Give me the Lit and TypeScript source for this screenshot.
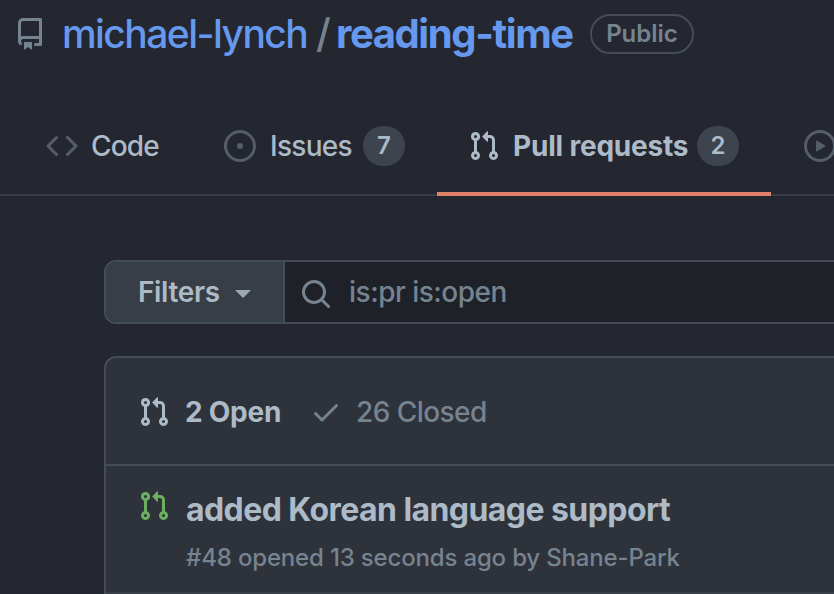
import { LitElement, html, css, svg } from "lit";
import { customElement, property } from "lit/decorators.js";

const ICONS: Record<string, string> = {
  repo: "M2 2.5A2.5 2.5 0 014.5 0h8.75a.75.75 0 01.75.75v12.5a.75.75 0 01-.75.75h-2.5a.75.75 0 110-1.5h1.75v-2h-8a1 1 0 00-.714 1.7.75.75 0 01-1.072 1.05A2.495 2.495 0 012 11.5v-9zm10.5-1V9h-8c-.356 0-.694.074-1 .208V2.5a1 1 0 011-1h8zM5 12.25v3.25a.25.25 0 00.4.2l1.45-1.087a.25.25 0 01.3 0L8.6 15.7a.25.25 0 00.4-.2v-3.25a.25.25 0 00-.25-.25h-3.5a.25.25 0 00-.25.25z",
  code: "M4.72 3.22a.75.75 0 011.06 1.06L2.06 8l3.72 3.72a.75.75 0 11-1.06 1.06L.47 8.53a.75.75 0 010-1.06l4.25-4.25zm6.56 0a.75.75 0 10-1.06 1.06L13.94 8l-3.72 3.72a.75.75 0 101.06 1.06l4.25-4.25a.75.75 0 000-1.06l-4.25-4.25z",
  issue: "M8 9.5a1.5 1.5 0 100-3 1.5 1.5 0 000 3zM8 0a8 8 0 100 16A8 8 0 008 0zM1.5 8a6.5 6.5 0 1113 0 6.5 6.5 0 01-13 0z",
  pull: "M7.177 3.073L9.573.677A.25.25 0 0110 .854v4.792a.25.25 0 01-.427.177L7.177 3.427a.25.25 0 010-.354zM3.75 2.5a.75.75 0 100 1.5.75.75 0 000-1.5zm-2.25.75a2.25 2.25 0 113 2.122v5.256a2.251 2.251 0 11-1.5 0V5.372A2.25 2.25 0 011.5 3.25zM11 2.5h-1V4h1a1 1 0 011 1v5.628a2.251 2.251 0 101.5 0V5A2.5 2.5 0 0011 2.5zm1 10.25a.75.75 0 111.5 0 .75.75 0 01-1.5 0zM3.75 12a.75.75 0 100 1.5.75.75 0 000-1.5z",
  play: "M1.5 8a6.5 6.5 0 1113 0 6.5 6.5 0 01-13 0zM8 0a8 8 0 100 16A8 8 0 008 0zM6.379 5.227A.25.25 0 006 5.442v5.117a.25.25 0 00.379.214l4.264-2.559a.25.25 0 000-.428L6.379 5.227z",
  search: "M11.5 7a4.499 4.499 0 11-8.998 0A4.499 4.499 0 0111.5 7zm-.82 4.74a6 6 0 111.06-1.06l3.04 3.04a.75.75 0 11-1.06 1.06l-3.04-3.04z",
  check: "M13.78 4.22a.75.75 0 010 1.06l-7.25 7.25a.75.75 0 01-1.06 0L2.22 9.28a.75.75 0 011.06-1.06L6 10.94l6.72-6.72a.75.75 0 011.06 0z",
};

@customElement("app-icon")
export class AppIcon extends LitElement {
  @property() name = "";

  static styles = css`
    :host { display: block; flex: none; width: 32px; height: 32px; }
    svg { display: block; width: 100%; height: 100%; fill: currentColor; }
  `;

  render() {
    return html`<svg viewBox="0 0 16 16" aria-hidden="true">
      ${svg`<path fill-rule="evenodd" d=${ICONS[this.name] ?? ""}></path>`}
    </svg>`;
  }
}

@customElement("app-root")
export class AppRoot extends LitElement {
  static styles = css`
    :host {
      display: block;
      height: 594px;
      overflow: hidden;
      background: #24272f;
      color: #adbac7;
      font-family: Inter, "Liberation Sans", sans-serif;
      font-weight: 450;
    }
    * { box-sizing: border-box; }
    span { white-space: nowrap; }

    .title { display: flex; height: 68px; padding-left: 14px; align-items: center; color: #768390; }
    .title app-icon { margin-right: 16px; }
    .owner, .slash, .repo { font-size: 40px; line-height: 60px; }
    .owner, .repo { color: #6699ee; }
    .owner { width: 254px; font-size: 39px; letter-spacing: -1.55px; }
    .slash { width: 20px; }
    .repo { width: 254px; font-weight: 700; letter-spacing: -1.4px; }
    .pill {
      width: 104px; height: 40px; border: 2px solid #444c56; border-radius: 20px;
      font-size: 24px; font-weight: 600; line-height: 35px; text-align: center;
    }

    .tabs { display: flex; height: 128px; padding-top: 28px; border-bottom: 2px solid #373e47; }
    .tab { display: flex; flex: none; height: 100px; align-items: center; font-size: 28px; }
    .tab app-icon { color: #545d68; }
    .tab .label { margin-left: 13px; letter-spacing: -0.8px; }
    .code { width: 178px; margin-left: 46px; }
    .issues { width: 213px; }
    .tab.issues .label { width: 82px; margin-left: 14px; letter-spacing: -0.7px; }
    .tab.issues .count { margin-left: 11px; }
    .pulls { width: 334px; padding: 4px 0 0 31px; border-bottom: 4px solid #e0826a; font-weight: 650; }
    .tab.pulls .label { width: 174px; letter-spacing: -0.2px; }
    .pulls app-icon { color: #adbac7; }
    .actions { margin-left: 33px; }
    .count {
      width: 42px; height: 40px; margin-left: 10px; border-radius: 20px; background: #3d444d;
      font-size: 24px; font-weight: 600; line-height: 40px; text-align: center;
    }

    .content { padding: 64px 0 0 104px; }
    .search {
      display: flex; height: 64px; margin-right: -20px; border: 2px solid #444c56;
      border-radius: 12px; overflow: hidden; background: #1e2128;
    }
    .filters {
      display: flex; width: 179px; padding-left: 32px; align-items: center;
      border-right: 2px solid #444c56; background: #373e45; font-size: 28px; font-weight: 600;
    }
    .filters span { width: 82px; letter-spacing: -0.35px; }
    .caret { margin: 4px 0 0 15px; border: 8px solid transparent; border-top-color: #9ba7b3; border-bottom: 0; }
    .query { display: flex; padding-left: 15px; align-items: center; color: #768390; font-size: 28px; }
    .query app-icon { margin-top: 4px; }
    .query span { margin-left: 17px; letter-spacing: -0.5px; }

    .list {
      height: 260px; margin: 32px -20px 0 0; border: 2px solid #444c56;
      border-radius: 12px; background: #2e323a;
    }
    .head { display: flex; height: 108px; padding: 2px 0 0 32px; align-items: center; border-bottom: 2px solid #444c56; font-size: 28px; }
    .open { width: 125px; margin-left: 15px; font-weight: 650; letter-spacing: -0.25px; }
    .closed { margin-left: 14px; color: #768390; letter-spacing: -0.55px; }
    .dim { color: #768390; }
    .row { display: flex; height: 128px; padding: 24px 0 0 32px; border-bottom: 2px solid #373e47; }
    .row app-icon { color: #6bb05f; }
    .text { display: flex; flex-direction: column; margin-left: 16px; }
    .name { font-size: 32px; font-weight: 650; line-height: 40px; letter-spacing: -0.57px; }
    .meta { margin-top: 10px; color: #768390; font-size: 24px; line-height: 36px; letter-spacing: -0.17px; }
  `;

  render() {
    return html`
      <header class="title">
        <app-icon name="repo"></app-icon>
        <span class="owner">michael-lynch</span>
        <span class="slash">/</span>
        <span class="repo">reading-time</span>
        <span class="pill">Public</span>
      </header>
      <nav class="tabs">
        <div class="tab code"><app-icon name="code"></app-icon><span class="label">Code</span></div>
        <div class="tab issues">
          <app-icon name="issue"></app-icon><span class="label">Issues</span><span class="count">7</span>
        </div>
        <div class="tab pulls">
          <app-icon name="pull"></app-icon><span class="label">Pull requests</span><span class="count">2</span>
        </div>
        <div class="tab actions"><app-icon name="play"></app-icon></div>
      </nav>
      <main class="content">
        <div class="search">
          <div class="filters"><span>Filters</span><i class="caret"></i></div>
          <div class="query"><app-icon name="search"></app-icon><span>is:pr is:open</span></div>
        </div>
        <section class="list">
          <div class="head">
            <app-icon name="pull"></app-icon><span class="open">2 Open</span>
            <app-icon class="dim" name="check"></app-icon><span class="closed">26 Closed</span>
          </div>
          <div class="row">
            <app-icon name="pull"></app-icon>
            <div class="text">
              <span class="name">added Korean language support</span>
              <span class="meta">#48 opened 13 seconds ago by Shane-Park</span>
            </div>
          </div>
        </section>
      </main>
    `;
  }
}
